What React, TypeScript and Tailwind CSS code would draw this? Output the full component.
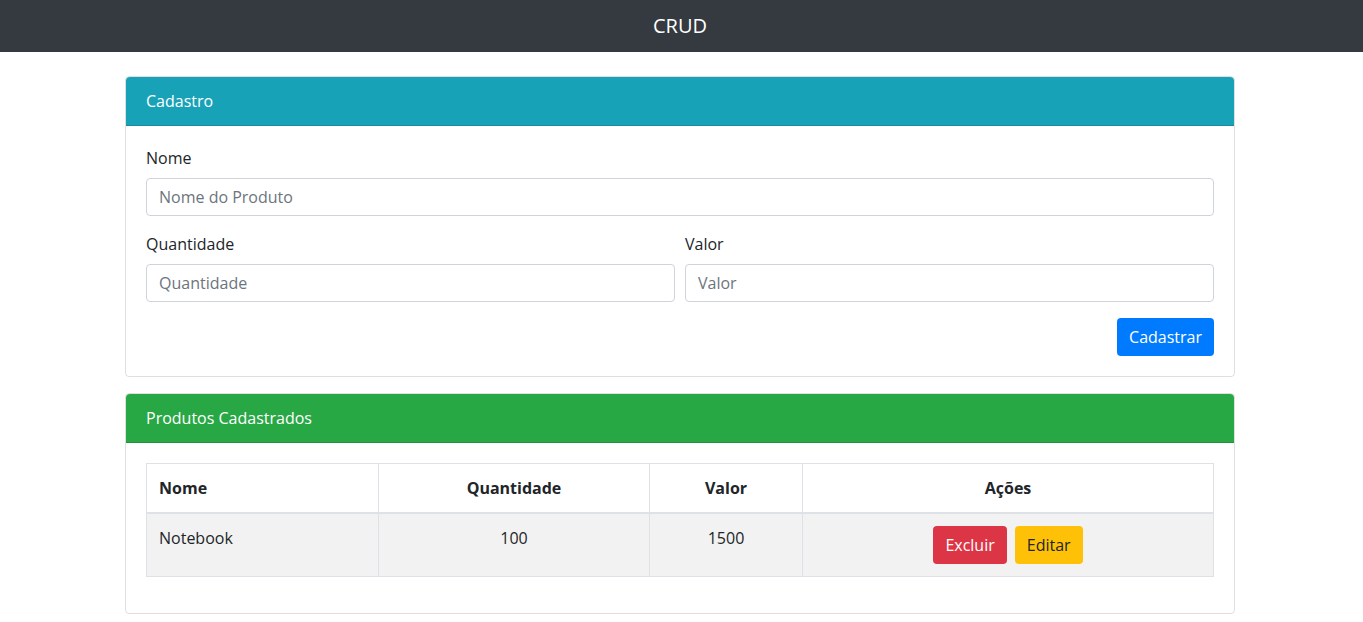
import React from "react";

const Label = ({ children }: { children: React.ReactNode }) => (
  <label className="mb-2 block leading-6 text-[#212529]">{children}</label>
);

const Input = ({ placeholder }: { placeholder: string }) => (
  <input
    type="text"
    placeholder={placeholder}
    className="block h-[38px] w-full rounded border border-[#ced4da] bg-white px-3 py-1.5 text-base leading-6 text-[#495057] outline-none placeholder:text-[#6c757d]"
  />
);

const CardHeader = ({ title, color }: { title: string; color: string }) => (
  <div
    className={`rounded-t border-b border-black/[0.125] px-5 py-3 leading-6 text-white ${color}`}
  >
    {title}
  </div>
);

export default function App() {
  return (
    <div className="min-h-screen bg-white font-['Open_Sans',sans-serif] text-base text-[#212529]">
      <nav className="flex h-[52px] items-center justify-center bg-[#343a40] pr-[3px]">
        <span className="text-xl leading-[30px] text-white">CRUD</span>
      </nav>

      <div className="pr-[3px]">
        <div className="mx-auto mt-6 w-[1110px]">
          <div className="mb-4 rounded border border-black/[0.125]">
            <CardHeader title="Cadastro" color="bg-[#17a2b8]" />
            <div className="p-5">
              <div className="mb-4">
                <Label>Nome</Label>
                <Input placeholder="Nome do Produto" />
              </div>
              <div className="mb-4 flex gap-2.5">
                <div className="flex-1">
                  <Label>Quantidade</Label>
                  <Input placeholder="Quantidade" />
                </div>
                <div className="flex-1">
                  <Label>Valor</Label>
                  <Input placeholder="Valor" />
                </div>
              </div>
              <div className="flex justify-end">
                <button className="h-[38px] rounded bg-[#007bff] px-3 leading-6 text-white">
                  Cadastrar
                </button>
              </div>
            </div>
          </div>

          <div className="rounded border border-black/[0.125]">
            <CardHeader title="Produtos Cadastrados" color="bg-[#28a745]" />
            <div className="p-5">
              <table className="mb-4 w-full border-collapse border border-[#dee2e6] text-[#212529]">
                <thead>
                  <tr>
                    <th className="w-[232px] border border-b-2 border-[#dee2e6] p-3 text-left font-bold leading-6">
                      Nome
                    </th>
                    <th className="w-[271px] border border-b-2 border-[#dee2e6] p-3 text-center font-bold leading-6">
                      Quantidade
                    </th>
                    <th className="w-[153px] border border-b-2 border-[#dee2e6] p-3 text-center font-bold leading-6">
                      Valor
                    </th>
                    <th className="border border-b-2 border-[#dee2e6] p-3 text-center font-bold leading-6">
                      Ações
                    </th>
                  </tr>
                </thead>
                <tbody>
                  <tr className="bg-[#f2f2f2]">
                    <td className="border border-[#dee2e6] p-3 align-top leading-6">
                      Notebook
                    </td>
                    <td className="border border-[#dee2e6] p-3 text-center align-top leading-6">
                      100
                    </td>
                    <td className="border border-[#dee2e6] p-3 text-center align-top leading-6">
                      1500
                    </td>
                    <td className="border border-[#dee2e6] p-3 align-top">
                      <div className="flex justify-center gap-2">
                        <button className="h-[38px] rounded bg-[#dc3545] px-3 leading-6 text-white">
                          Excluir
                        </button>
                        <button className="h-[38px] rounded bg-[#ffc107] px-3 leading-6 text-[#212529]">
                          Editar
                        </button>
                      </div>
                    </td>
                  </tr>
                </tbody>
              </table>
            </div>
          </div>
        </div>
      </div>
    </div>
  );
}
